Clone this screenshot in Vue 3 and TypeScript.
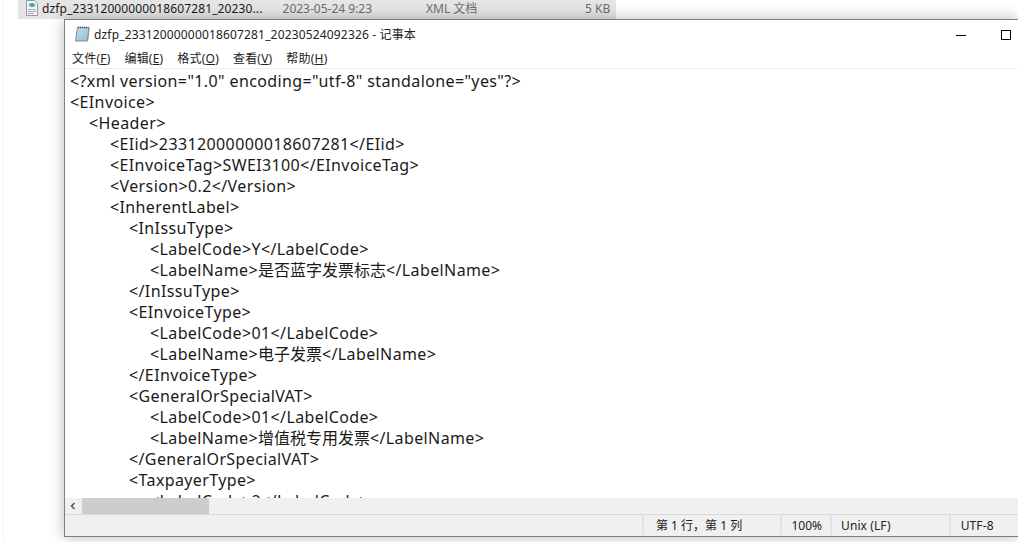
<script setup lang="ts">
interface Row { level: number; parts: { text: string; cjk: boolean }[] }
const source: [number, string][] = [
  [0, '<?xml version="1.0" encoding="utf-8" standalone="yes"?>'],
  [0, '<EInvoice>'],
  [1, '<Header>'],
  [2, '<EIid>23312000000018607281</EIid>'],
  [2, '<EInvoiceTag>SWEI3100</EInvoiceTag>'],
  [2, '<Version>0.2</Version>'],
  [2, '<InherentLabel>'],
  [3, '<InIssuType>'],
  [4, '<LabelCode>Y</LabelCode>'],
  [4, '<LabelName>是否蓝字发票标志</LabelName>'],
  [3, '</InIssuType>'],
  [3, '<EInvoiceType>'],
  [4, '<LabelCode>01</LabelCode>'],
  [4, '<LabelName>电子发票</LabelName>'],
  [3, '</EInvoiceType>'],
  [3, '<GeneralOrSpecialVAT>'],
  [4, '<LabelCode>01</LabelCode>'],
  [4, '<LabelName>增值税专用发票</LabelName>'],
  [3, '</GeneralOrSpecialVAT>'],
  [3, '<TaxpayerType>'],
  [4, '<LabelCode>2</LabelCode>'],
]
const rows: Row[] = source.map(([level, text]) => ({
  level,
  parts: text
    .split(/([\u4e00-\u9fff]+)/)
    .filter((t) => t.length > 0)
    .map((t) => ({ text: t, cjk: /[\u4e00-\u9fff]/.test(t) })),
}))
const menus = [
  { label: '文件', key: 'F' },
  { label: '编辑', key: 'E' },
  { label: '格式', key: 'O' },
  { label: '查看', key: 'V' },
  { label: '帮助', key: 'H' },
]
</script>

<template>
  <div class="page">
    <div class="file-row">
      <div class="file-cell">
        <svg class="xml-icon" width="16" height="16" viewBox="0 0 16 16">
          <path d="M2.5 .5h8l3 3v12h-11z" fill="#f7f7f7" stroke="#9a9a9a" />
          <path d="M4 9.5h8M4 11.5h8M4 13.5h6" stroke="#a8a8a8" />
          <ellipse cx="8" cy="5" rx="3.4" ry="2.2" fill="#6fb7d8" />
          <circle cx="8" cy="5" r="1" fill="#1f6f99" />
        </svg>
        <span class="file-name">dzfp_23312000000018607281_20230...</span>
        <span class="file-date">2023-05-24 9:23</span>
        <span class="file-type">XML 文档</span>
        <span class="file-size">5 KB</span>
      </div>
    </div>
    <div class="window">
      <div class="titlebar">
        <svg class="note-icon" width="16" height="16" viewBox="0 0 16 16">
          <defs>
            <linearGradient id="pad" x1="0" y1="0" x2="1" y2="1">
              <stop offset="0" stop-color="#c9e3ee" />
              <stop offset="1" stop-color="#8fbdd2" />
            </linearGradient>
          </defs>
          <path d="M3.5 1.5h11.5l-1.5 13.5H1.5z" fill="url(#pad)" stroke="#7b8f9a" />
          <path d="M4 1.5h10.5" stroke="#55707e" stroke-dasharray="1 1" stroke-width="2" />
          <path d="M4 5h9M3.6 8h9M3.2 11h9" stroke="#a6cbdc" />
          <path d="M15 2 13.5 15" stroke="#9a8f78" fill="none" />
        </svg>
        <span class="title">dzfp_23312000000018607281_20230524092326 - 记事本</span>
        <span class="controls">
          <span class="minimize"></span>
          <span class="maximize"></span>
        </span>
      </div>
      <div class="menubar">
        <span v-for="m in menus" :key="m.key" class="menu">{{ m.label }}(<u>{{ m.key }}</u>)</span>
      </div>
      <div class="editor">
        <div v-for="(r, i) in rows" :key="i" class="line" :class="`level-${r.level}`"><span
          v-for="(p, j) in r.parts" :key="j" :class="{ cjk: p.cjk }">{{ p.text }}</span></div>
      </div>
      <div class="hscroll">
        <svg class="arrow" width="8" height="8" viewBox="0 0 8 8">
          <path d="M5.5 1 2.5 4l3 3" fill="none" stroke="#555" stroke-width="1.6" />
        </svg>
        <div class="thumb"></div>
      </div>
      <div class="statusbar">
        <span class="cell pos">第 1 行，第 1 列</span>
        <span class="cell zoom">100%</span>
        <span class="cell eol">Unix (LF)</span>
        <span class="cell enc">UTF-8</span>
      </div>
    </div>
  </div>
</template>

<style scoped>
.page {
  width: 1018px;
  height: 542px;
  overflow: hidden;
  background: linear-gradient(to right, #fff 3px, #f3f3f3 3px, #f3f3f3 4px, #fff 4px);
  font-family: "Noto Sans", "Noto Sans CJK SC", sans-serif;
  color: #1a1a1a;
}
.file-row {
  height: 19px;
  padding-left: 18px;
}
.file-cell {
  position: relative;
  width: 598px;
  height: 19px;
  background: #e5e5e5;
  font-size: 12px;
  line-height: 17px;
  white-space: nowrap;
  display: flex;
  align-items: flex-start;
}
.xml-icon { margin: 0 0 0 6px; }
.file-name { margin-left: 2px; letter-spacing: .12px; }
.file-date, .file-type, .file-size { color: #6d6d6d; }
.file-date { margin-left: 20px; }
.file-type { position: absolute; left: 408px; }
.file-size { position: absolute; left: 567px; }
.window {
  margin-left: 64px;
  height: 518px;
  box-sizing: border-box;
  background: #fff;
  border: 1px solid #7f7f7f;
  border-right: 0;
  box-shadow: 0 0 14px rgba(0, 0, 0, .28);
  display: flex;
  flex-direction: column;
  position: relative;
}
.titlebar {
  height: 28px;
  flex: none;
  display: flex;
  align-items: center;
  padding-left: 9px;
  font-size: 12px;
}
.title { margin-left: 4px; color: #222; letter-spacing: .16px; }
.controls {
  margin-left: auto;
  display: flex;
  align-items: center;
  gap: 35px;
  padding: 2px 7px 0 0;
}
.minimize { width: 10px; height: 1px; background: #000; }
.maximize { width: 10px; height: 10px; border: 1px solid #000; box-sizing: border-box; }
.menubar {
  height: 21px;
  flex: none;
  display: flex;
  gap: 14px;
  padding-left: 7px;
  font-size: 12px;
  line-height: 21px;
  letter-spacing: .2px;
  border-bottom: 1px solid #f0f0f0;
  box-sizing: border-box;
  color: #222;
}
.editor {
  flex: 1;
  min-height: 0;
  overflow: hidden;
  padding: 2px 0 0 5px;
  font-size: 16px;
  line-height: 21px;
  letter-spacing: .38px;
  white-space: pre;
}
.cjk { letter-spacing: 0; }
.line { height: 21px; }
.level-1 { padding-left: 19px; }
.level-2 { padding-left: 40px; }
.level-3 { padding-left: 59px; }
.level-4 { padding-left: 80px; }
.hscroll {
  height: 16px;
  flex: none;
  display: flex;
  align-items: stretch;
  background: #f0f0f0;
}
.arrow { align-self: center; margin-left: 4px; margin-right: 5px; }
.thumb { width: 127px; background: #cdcdcd; }
.statusbar {
  height: 22px;
  flex: none;
  display: flex;
  background: #f0f0f0;
  border-top: 1px solid #d9d9d9;
  font-size: 12px;
  color: #222;
  box-sizing: border-box;
}
.cell { border-left: 2px solid #e2e2e2; margin: 0; padding-left: 8px; box-sizing: border-box; height: 20px; line-height: 21px; }
.pos { margin-left: 577px; width: 140px; padding-left: 12px; }
.zoom { width: 50px; padding-left: 9px; }
.eol { width: 120px; padding-left: 9px; letter-spacing: .1px; }
.enc { width: 70px; padding-left: 10px; letter-spacing: .1px; }
</style>

<style>
html, body { margin: 0; padding: 0; overflow: hidden; }
</style>
